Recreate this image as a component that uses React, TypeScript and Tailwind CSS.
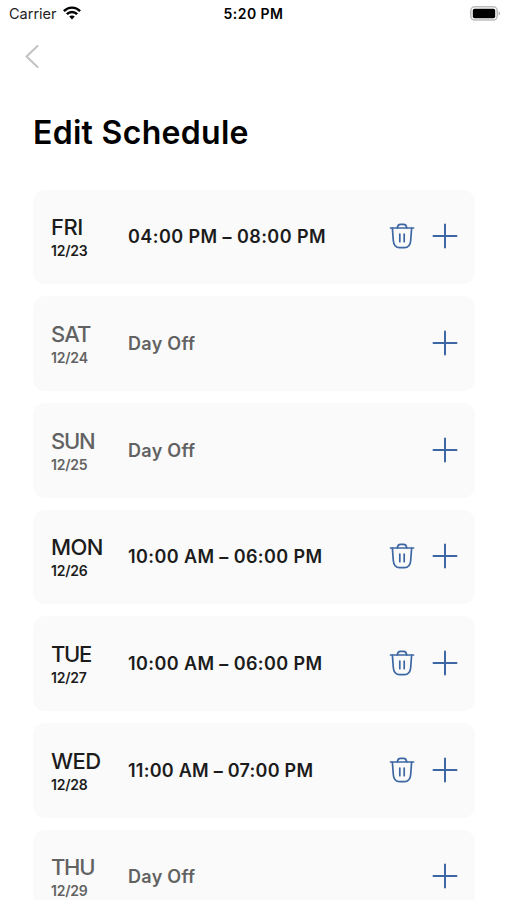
interface ScheduleDay {
  day: string;
  date: string;
  hours?: string;
  dayTracking: string;
  hoursTracking: string;
}

const schedule: ScheduleDay[] = [
  {day: "FRI", date: "12/23", hours: "04:00 PM – 08:00 PM", dayTracking: "tracking-[-0.5px]", hoursTracking: "tracking-[0.43px]"},
  {day: "SAT", date: "12/24", dayTracking: "tracking-[-0.9px]", hoursTracking: "tracking-[0.3px]"},
  {day: "SUN", date: "12/25", dayTracking: "tracking-[-1.2px]", hoursTracking: "tracking-[0.3px]"},
  {day: "MON", date: "12/26", hours: "10:00 AM – 06:00 PM", dayTracking: "tracking-[-0.6px]", hoursTracking: "tracking-[0.4px]"},
  {day: "TUE", date: "12/27", hours: "10:00 AM – 06:00 PM", dayTracking: "tracking-[-1.3px]", hoursTracking: "tracking-[0.4px]"},
  {day: "WED", date: "12/28", hours: "11:00 AM – 07:00 PM", dayTracking: "tracking-[-0.6px]", hoursTracking: "tracking-[0.25px]"},
  {day: "THU", date: "12/29", dayTracking: "tracking-[-1.3px]", hoursTracking: "tracking-[0.3px]"},
];

const WifiIcon = () => (
  <svg width="18" height="14" viewBox="0 0 18 14" fill="none" stroke="#000" strokeWidth="2.4" className="relative -top-px">
    <path d="M0.9 5.1C5.4 0.5 12.6 0.5 17.1 5.1" />
    <path d="M3.8 8.1C6.7 5.2 11.3 5.2 14.2 8.1" />
    <path d="M9 13.4L6.2 10.6C7.8 9.1 10.2 9.1 11.8 10.6Z" fill="#000" stroke="none" />
  </svg>
);

const BatteryIcon = () => (
  <svg width="32" height="16" viewBox="0 0 32 16">
    <rect x="1.8" y="0.8" width="26.4" height="13.2" rx="4" fill="#fff" stroke="#bdbdbd" strokeWidth="1.6" />
    <rect x="3.8" y="2.7" width="22.4" height="9.6" rx="1.8" fill="#000" />
    <path d="M29.6 5.2C31.5 6.2 31.5 8.6 29.6 9.6Z" fill="#aaa" />
  </svg>
);

const TrashIcon = () => (
  <svg width="26" height="26" viewBox="0 0 26 26" fill="none" stroke="#3d67a3" strokeWidth="1.7" strokeLinecap="round" strokeLinejoin="round">
    <path d="M1.5 5H24.5" />
    <path d="M8.3 4.8C8.6 2.4 9.6 1.3 11.4 1.3H14.6C16.4 1.3 17.4 2.4 17.7 4.8" />
    <path d="M3.4 5.3L4.3 17.5C4.7 22.6 6.7 24.7 10.6 24.7H15.4C19.3 24.7 21.3 22.6 21.7 17.5L22.6 5.3" />
    <path d="M10.8 11V18.7M15.2 11V18.7" />
  </svg>
);

const PlusIcon = () => (
  <svg width="26" height="26" viewBox="0 0 26 26" fill="none" stroke="#3d67a3" strokeWidth="2" strokeLinecap="round">
    <path d="M13 1.5V24.5M1.5 13H24.5" />
  </svg>
);

const ScheduleRow = ({day, date, hours, dayTracking, hoursTracking}: ScheduleDay) => {
  return (
    <div
      className={`flex h-[94.7px] shrink-0 items-center rounded-xl bg-[#fafafa] pl-[18px] pr-[17.5px] ${hours ? "text-[#1c1c1c]" : "text-[#626262]"}`}
    >
      <div className="w-[77px] pt-[3px]">
        <p className={`text-[22px] font-[550] leading-[26px] ${dayTracking}`}>{day}</p>
        <p className="text-sm font-semibold leading-[22px] tracking-[-0.2px]">{date}</p>
      </div>
      <p className={`whitespace-nowrap pt-px text-lg font-semibold ${hoursTracking}`}>
        {hours ?? "Day Off"}
      </p>
      <div className="ml-auto flex items-center gap-[17px] pb-px">
        {hours && (
          <button aria-label="Delete">
            <TrashIcon />
          </button>
        )}
        <button aria-label="Add">
          <PlusIcon />
        </button>
      </div>
    </div>
  );
};

const App = () => {
  return (
    <div className="flex h-screen flex-col overflow-hidden bg-white font-['Inter',sans-serif] text-black">
      <header className="grid h-7 shrink-0 grid-cols-3 items-center pl-[9px] pr-[6px] text-[14.5px]">
        <div className="flex items-center gap-1.5 text-[#222]">
          <span>Carrier</span>
          <WifiIcon />
        </div>
        <span className="-ml-[3px] text-center text-sm font-semibold tracking-[0.45px]">5:20 PM</span>
        <div className="flex justify-end">
          <BatteryIcon />
        </div>
      </header>
      <nav className="flex h-14 shrink-0 items-center pl-6">
        <button aria-label="Back">
          <svg width="16" height="24" viewBox="0 0 16 24" fill="none" stroke="#c2c2c2" strokeWidth="2" strokeLinecap="round" strokeLinejoin="round">
            <path d="M13.5 2L2.5 12.5L13.5 23" />
          </svg>
        </button>
      </nav>
      <h1 className="mt-[29px] shrink-0 pl-[33px] text-[32px] font-semibold leading-10 tracking-[0.3px]">Edit Schedule</h1>
      <main className="mt-[36.5px] flex flex-col gap-3 pl-[33px] pr-[32px]">
        {schedule.map((item) => (
          <ScheduleRow key={item.date} {...item} />
        ))}
      </main>
    </div>
  );
};

export default App;
